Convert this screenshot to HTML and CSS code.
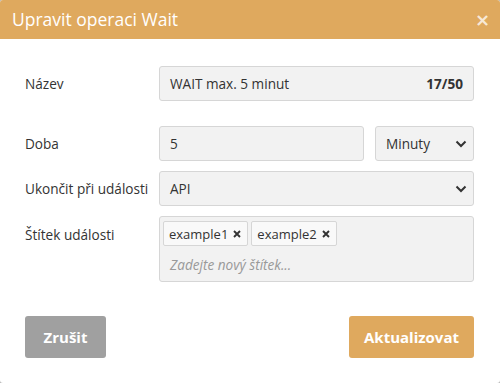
FILE: index.html
```html
<!DOCTYPE html>
<html lang="cs">
<head>
  <meta charset="UTF-8">
  <meta name="viewport" content="width=device-width, initial-scale=1.0">
  <title>Upravit operaci Wait</title>
  <link rel="stylesheet" href="styles.css">
</head>
<body>
  <div class="dialog">
    <div class="dialog-header">
      <h1>Upravit operaci Wait</h1>
      <button class="close-button" type="button">&times;</button>
    </div>

    <form class="dialog-body">
      <div class="row row-name">
        <label class="label">Název</label>
        <div class="field field-counter">
          <span class="value">WAIT max. 5 minut</span>
          <span class="counter">17/50</span>
        </div>
      </div>

      <div class="row">
        <label class="label">Doba</label>
        <div class="field-group">
          <div class="field field-grow">5</div>
          <div class="field select select-unit">
            <span>Minuty</span>
            <svg class="chevron" width="12" height="8" viewBox="0 0 12 8"><path d="M1.5 1.5 L6 6 L10.5 1.5" fill="none" stroke="#333" stroke-width="2"/></svg>
          </div>
        </div>
      </div>

      <div class="row">
        <label class="label">Ukončit při události</label>
        <div class="field select">
          <span>API</span>
          <svg class="chevron" width="12" height="8" viewBox="0 0 12 8"><path d="M1.5 1.5 L6 6 L10.5 1.5" fill="none" stroke="#333" stroke-width="2"/></svg>
        </div>
      </div>

      <div class="row row-tags">
        <label class="label">Štítek události</label>
        <div class="field tags">
          <div class="tag-list">
            <span class="tag">example1 <svg class="tag-remove" width="8" height="8" viewBox="0 0 8 8"><path d="M1 1 L7 7 M7 1 L1 7" stroke="#333" stroke-width="1.9"/></svg></span>
            <span class="tag">example2 <svg class="tag-remove" width="8" height="8" viewBox="0 0 8 8"><path d="M1 1 L7 7 M7 1 L1 7" stroke="#333" stroke-width="1.9"/></svg></span>
          </div>
          <div class="tag-placeholder">Zadejte nový štítek...</div>
        </div>
      </div>

      <div class="actions">
        <button class="btn btn-cancel" type="button">Zrušit</button>
        <button class="btn btn-submit" type="submit">Aktualizovat</button>
      </div>
    </form>
  </div>
</body>
</html>
```

FILE: styles.css
```css
html, body {
  margin: 0;
  height: 100%;
  background: #b9b9b9;
}

body {
  font-family: 'Open Sans', 'Noto Sans', sans-serif;
  color: #333;
}

.dialog {
  width: 500px;
  height: 383px;
  background: #fff;
  border-radius: 3px;
  overflow: hidden;
  box-sizing: border-box;
}

.dialog-header {
  height: 39px;
  background-color: #dfa95e;
  display: flex;
  align-items: center;
  justify-content: space-between;
  padding: 0 10px 0 12px;
}

.dialog-header h1 {
  margin: 0;
  font-size: 17.5px;
  font-weight: normal;
  color: #fff;
  line-height: 1;
}

.close-button {
  border: none;
  background: none;
  color: rgba(255, 255, 255, 0.75);
  font-family: 'DejaVu Sans', sans-serif;
  font-weight: bold;
  font-size: 18px;
  padding: 0;
  cursor: pointer;
}

.dialog-body {
  padding: 27px 26px 25px 25px;
  display: flex;
  flex-direction: column;
  gap: 10px;
}

.row {
  display: flex;
  align-items: flex-start;
}

.row-name {
  margin-bottom: 15px;
}

.label {
  width: 134px;
  flex-shrink: 0;
  font-size: 13.6px;
  line-height: 35px;
}

.row-tags .label {
  line-height: 37px;
}

.field {
  flex: 1;
  height: 35px;
  box-sizing: border-box;
  background: #f2f2f2;
  border: 1px solid #d6d6d6;
  border-radius: 3px;
  padding: 0 10px;
  font-size: 13.6px;
  display: flex;
  align-items: center;
}

.field-counter {
  justify-content: space-between;
}

.counter {
  font-weight: bold;
}

.field-group {
  flex: 1;
  display: flex;
  gap: 11px;
}

.select {
  justify-content: space-between;
  padding-right: 6px;
}

.select-unit {
  flex: 0 0 99px;
}

.chevron {
  display: block;
}

.tags {
  height: 66px;
  flex-direction: column;
  align-items: flex-start;
  padding: 4px 3px;
}

.tag-list {
  display: flex;
  gap: 3px;
}

.tag {
  height: 25px;
  box-sizing: border-box;
  background: #f9f9f9;
  border: 1px solid #d6d6d6;
  border-radius: 2px;
  padding: 0 6px 0 5px;
  font-size: 13px;
  display: flex;
  align-items: center;
  gap: 5px;
}

.tag-remove {
  display: block;
}

.tag-placeholder {
  font-style: italic;
  color: #999;
  font-size: 13.6px;
  margin: 9px 0 0 7px;
}

.actions {
  display: flex;
  justify-content: space-between;
  margin-top: 24px;
}

.btn {
  height: 42px;
  border: none;
  border-radius: 3px;
  color: #fff;
  font-family: 'Open Sans', sans-serif;
  font-weight: bold;
  font-size: 15px;
  cursor: pointer;
}

.btn-cancel {
  width: 81px;
  background-color: #a0a0a0;
}

.btn-submit {
  width: 125px;
  background-color: #dfa95e;
}
```
